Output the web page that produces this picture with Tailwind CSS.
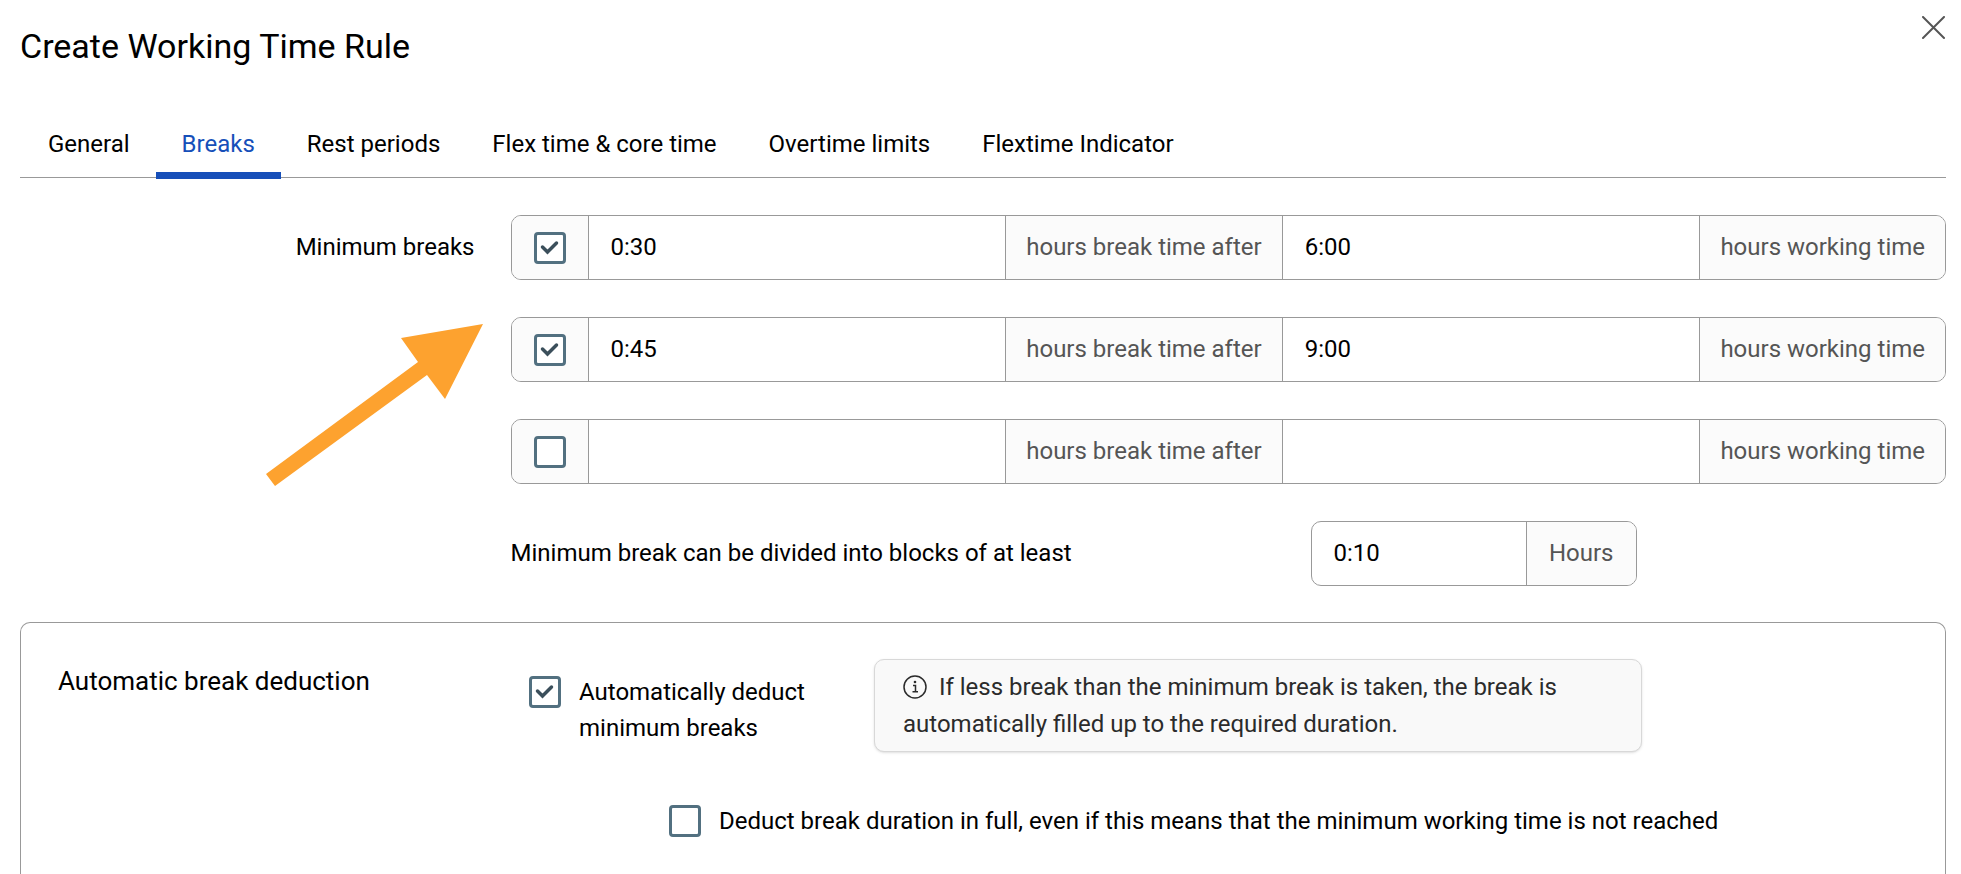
<!DOCTYPE html>
<html lang="en">
<head>
  <meta charset="UTF-8" />
  <meta name="viewport" content="width=device-width, initial-scale=1.0" />
  <title>Create Working Time Rule</title>
  <!-- Tailwind CSS CDN -->
  <script src="https://cdn.jsdelivr.net/npm/@tailwindcss/browser@4"></script>
</head>
<body class="bg-white text-black font-[Roboto,sans-serif] text-[24px] leading-9">
  <div role="dialog" aria-labelledby="title" class="relative flex flex-col min-h-screen pl-5 pr-[15px]">
    <!-- Header -->
    <header class="flex items-start justify-between pt-4">
      <h1 id="title" class="text-[34px] leading-10 pt-[10px]">Create Working Time Rule</h1>
      <button type="button" aria-label="Close" class="text-[#555]">
        <svg class="w-6 h-6" viewBox="0 0 24 24" fill="none" stroke="currentColor" stroke-width="2" stroke-linecap="round"><path d="M1 1l21 21M22 1L1 22" /></svg>
      </button>
    </header>

    <!-- Tabs -->
    <nav class="flex mt-[50px] pl-[2px] border-b border-[#999]">
      <a href="#general" class="px-[26px] pt-[10px] h-[61px]">General</a>
      <a href="#breaks" class="px-[26px] pt-[10px] h-[63px] -mb-[2px] border-b-7 border-[#164fb9] text-[#164fb9]" aria-current="page">Breaks</a>
      <a href="#rest" class="px-[26px] pt-[10px] h-[61px]">Rest periods</a>
      <a href="#flex" class="px-[26px] pt-[10px] h-[61px]">Flex time &amp; core time</a>
      <a href="#overtime" class="px-[26px] pt-[10px] h-[61px]">Overtime limits</a>
      <a href="#indicator" class="px-[26px] pt-[10px] h-[61px]">Flextime Indicator</a>
    </nav>

    <!-- Minimum breaks -->
    <div class="flex -mx-[18px] mt-[37px]">
      <div class="w-1/4 px-[18px] pt-[14px] text-right">Minimum breaks</div>
      <div class="w-3/4 px-[18px] space-y-[37px]">
        <div class="flex h-[65px] border border-[#999] rounded-[10px] overflow-hidden">
          <label class="grid place-items-center w-[77px] shrink-0 bg-[#fbfbfb] border-r border-[#999]">
            <input type="checkbox" checked aria-label="Use first break rule" class="appearance-none col-start-1 row-start-1 w-8 h-8 bg-white border-3 border-[#527080] rounded" />
            <svg class="col-start-1 row-start-1 w-8 h-8" viewBox="0 0 32 32" fill="none" stroke="#3b4f5b" stroke-width="3.5" stroke-linecap="round"><path d="M8.5 15l5 5 9-9" /></svg>
          </label>
          <input type="text" value="0:30" aria-label="Break time 1" class="flex-1 min-w-0 px-[22px] pb-[2px]" />
          <span class="flex items-center px-5 pb-[2px] bg-[#fbfbfb] border-x border-[#999] text-[#555]">hours break time after</span>
          <input type="text" value="6:00" aria-label="Working time 1" class="flex-1 min-w-0 px-[22px] pb-[2px]" />
          <span class="flex items-center px-5 pb-[2px] bg-[#fbfbfb] border-l border-[#999] text-[#555]">hours working time</span>
        </div>
        <div class="flex h-[65px] border border-[#999] rounded-[10px] overflow-hidden">
          <label class="grid place-items-center w-[77px] shrink-0 bg-[#fbfbfb] border-r border-[#999]">
            <input type="checkbox" checked aria-label="Use second break rule" class="appearance-none col-start-1 row-start-1 w-8 h-8 bg-white border-3 border-[#527080] rounded" />
            <svg class="col-start-1 row-start-1 w-8 h-8" viewBox="0 0 32 32" fill="none" stroke="#3b4f5b" stroke-width="3.5" stroke-linecap="round"><path d="M8.5 15l5 5 9-9" /></svg>
          </label>
          <input type="text" value="0:45" aria-label="Break time 2" class="flex-1 min-w-0 px-[22px] pb-[2px]" />
          <span class="flex items-center px-5 pb-[2px] bg-[#fbfbfb] border-x border-[#999] text-[#555]">hours break time after</span>
          <input type="text" value="9:00" aria-label="Working time 2" class="flex-1 min-w-0 px-[22px] pb-[2px]" />
          <span class="flex items-center px-5 pb-[2px] bg-[#fbfbfb] border-l border-[#999] text-[#555]">hours working time</span>
        </div>
        <div class="flex h-[65px] border border-[#999] rounded-[10px] overflow-hidden">
          <label class="grid place-items-center w-[77px] shrink-0 bg-[#fbfbfb] border-r border-[#999]">
            <input type="checkbox" aria-label="Use third break rule" class="appearance-none w-8 h-8 bg-white border-3 border-[#527080] rounded" />
          </label>
          <input type="text" aria-label="Break time 3" class="flex-1 min-w-0 px-[22px] pb-[2px]" />
          <span class="flex items-center px-5 pb-[2px] bg-[#fbfbfb] border-x border-[#999] text-[#555]">hours break time after</span>
          <input type="text" aria-label="Working time 3" class="flex-1 min-w-0 px-[22px] pb-[2px]" />
          <span class="flex items-center px-5 pb-[2px] bg-[#fbfbfb] border-l border-[#999] text-[#555]">hours working time</span>
        </div>
        <div class="flex items-center">
          <label for="blocks" class="w-[800px] pb-[2px]">Minimum break can be divided into blocks of at least</label>
          <div class="flex w-[326px] h-[65px] border border-[#999] rounded-[10px] overflow-hidden">
            <input id="blocks" type="text" value="0:10" class="flex-1 min-w-0 px-[22px] pb-[2px]" />
            <span class="flex items-center px-[22px] pb-[2px] bg-[#fbfbfb] border-l border-[#999] text-[#555]">Hours</span>
          </div>
        </div>
      </div>
    </div>

    <!-- Automatic break deduction -->
    <section class="flex grow mt-9 pl-[37px] pr-9 pt-9 border border-b-0 border-[#999] rounded-t-[10px]">
      <h2 class="w-[471px] shrink-0 pt-1 text-[26px]">Automatic break deduction</h2>
      <div class="flex-1">
        <div class="flex">
          <label class="flex w-[345px] pt-[15px]">
            <input type="checkbox" checked class="appearance-none shrink-0 mt-[2px] w-8 h-8 bg-white border-3 border-[#527080] rounded" />
            <svg class="shrink-0 mt-[2px] w-8 h-8 -ml-8 mr-[18px]" viewBox="0 0 32 32" fill="none" stroke="#3b4f5b" stroke-width="3.5" stroke-linecap="round"><path d="M8.5 15l5 5 9-9" /></svg>
            <span>Automatically deduct<br />minimum breaks</span>
          </label>
          <p class="w-[768px] px-7 pt-[9px] pb-[8px] leading-[37px] bg-[#f9f9f9] text-[#2b2b2b] border border-[#d8d8d8] rounded-[10px] shadow-sm">
            <svg class="inline w-6 h-6 mr-[6px] -mt-1" viewBox="0 0 24 24" fill="none" stroke="currentColor" stroke-width="1.5"><circle cx="12" cy="12" r="11" /><path d="M10 10.5h2.5v6M9.5 16.75h5.5" /><circle cx="12" cy="7" r="1.3" fill="currentColor" stroke="none" /></svg>
            If less break than the minimum break is taken, the break is automatically filled up to the required duration.
          </p>
        </div>
        <label class="flex mt-[51px] ml-[140px]">
          <input type="checkbox" class="appearance-none shrink-0 mt-[2px] mr-[18px] w-8 h-8 bg-white border-3 border-[#527080] rounded" />
          Deduct break duration in full, even if this means that the minimum working time is not reached
        </label>
      </div>
    </section>

    <!-- Arrow pointing at the second rule -->
    <svg class="absolute left-[266px] top-[324px] w-[218px] h-[163px]" viewBox="0 0 218 163" fill="#fda22f"><path d="M217 0L135 14l17 24L0 150l9 12L161 51l18 24z" /></svg>
  </div>
</body>
</html>
